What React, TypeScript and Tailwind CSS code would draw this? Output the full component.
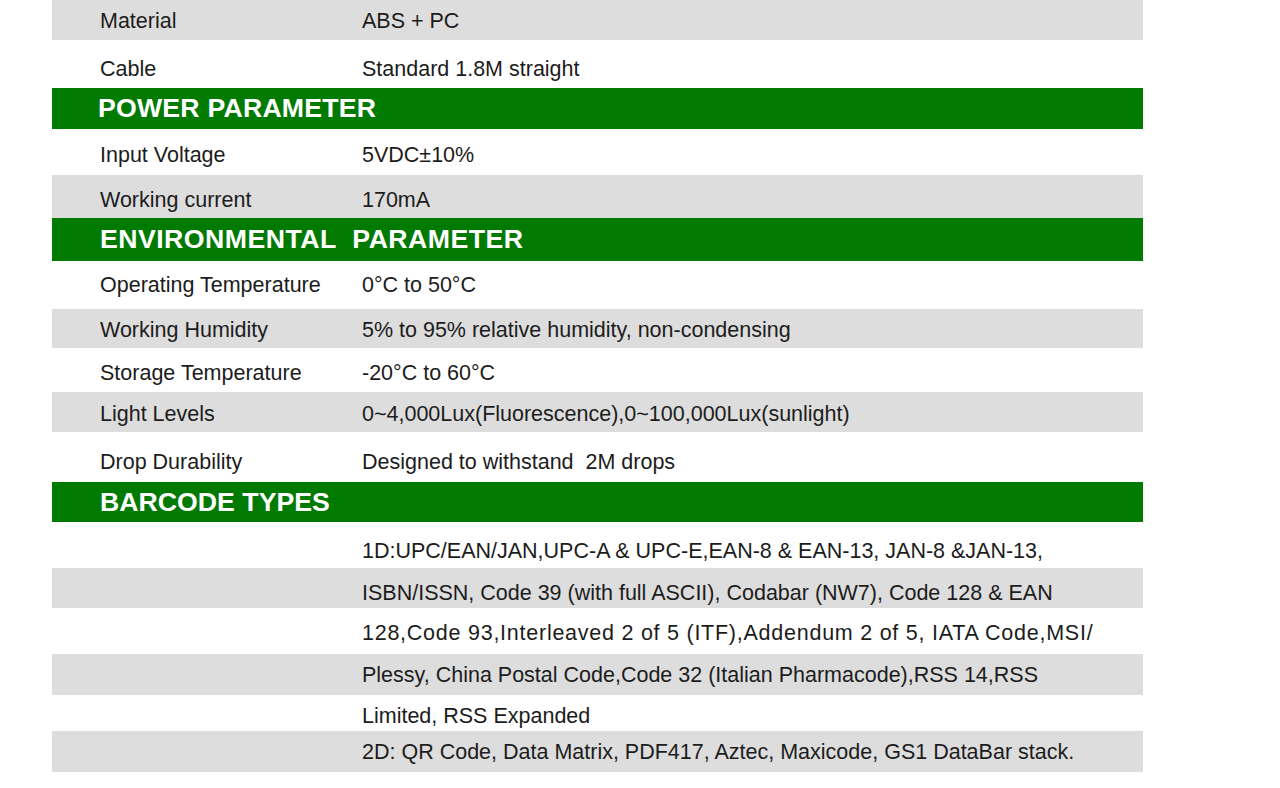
import React from 'react';

type Row =
  | { kind: 'head'; title: string; h: string; pad: string }
  | { kind: 'row'; label: string; value: string; h: string; grey: boolean; shift: string; track?: string };

const rows: Row[] = [
  { kind: 'row', label: 'Material', value: 'ABS + PC', h: 'h-[40px]', grey: true, shift: 'pt-[3px]' },
  { kind: 'row', label: 'Cable', value: 'Standard 1.8M straight', h: 'h-[48px]', grey: false, shift: 'pt-[11px]' },
  { kind: 'head', title: 'POWER PARAMETER', h: 'h-[41px] tracking-[0.2px]', pad: 'pl-[46px]' },
  { kind: 'row', label: 'Input Voltage', value: '5VDC±10%', h: 'h-[46px]', grey: false, shift: 'pt-[7px]' },
  { kind: 'row', label: 'Working current', value: '170mA', h: 'h-[43px]', grey: true, shift: 'pt-[8px]' },
  { kind: 'head', title: 'ENVIRONMENTAL\u00a0\u00a0PARAMETER', h: 'h-[43px] tracking-[0.45px]', pad: 'pl-[48px]' },
  { kind: 'row', label: 'Operating Temperature', value: '0°C to 50°C', h: 'h-[48px]', grey: false, shift: 'pt-[2px]' },
  { kind: 'row', label: 'Working Humidity', value: '5% to 95% relative humidity, non-condensing', h: 'h-[39px]', grey: true, shift: 'pt-[4px]' },
  { kind: 'row', label: 'Storage Temperature', value: '-20°C to 60°C', h: 'h-[44px]', grey: false, shift: 'pt-[8px]' },
  { kind: 'row', label: 'Light Levels', value: '0~4,000Lux(Fluorescence),0~100,000Lux(sunlight)', h: 'h-[40px]', grey: true, shift: 'pt-[5px]' },
  { kind: 'row', label: 'Drop Durability', value: 'Designed to withstand\u00a0\u00a02M drops', h: 'h-[50px]', grey: false, shift: 'pt-[11px]' },
  { kind: 'head', title: 'BARCODE TYPES', h: 'h-[40px]', pad: 'pl-[48px]' },
  { kind: 'row', label: '', value: '1D:UPC/EAN/JAN,UPC-A & UPC-E,EAN-8 & EAN-13, JAN-8 &JAN-13,', h: 'h-[46px]', grey: false, shift: 'pt-[13px]' },
  { kind: 'row', label: '', value: 'ISBN/ISSN, Code 39 (with full ASCII), Codabar (NW7), Code 128 & EAN', h: 'h-[40px]', grey: true, shift: 'pt-[11px]' },
  { kind: 'row', label: '', value: '128,Code 93,Interleaved 2 of 5 (ITF),Addendum 2 of 5, IATA Code,MSI/', h: 'h-[46px]', grey: false, shift: 'pt-[6px]', track: 'tracking-[0.75px]' },
  { kind: 'row', label: '', value: 'Plessy, China Postal Code,Code 32 (Italian Pharmacode),RSS 14,RSS', h: 'h-[41px]', grey: true, shift: 'pt-[3px]' },
  { kind: 'row', label: '', value: 'Limited, RSS Expanded', h: 'h-[36px]', grey: false, shift: 'pt-[7px]' },
  { kind: 'row', label: '', value: '2D: QR Code, Data Matrix, PDF417, Aztec, Maxicode, GS1 DataBar stack.', h: 'h-[41px]', grey: true, shift: 'pt-[3px]' },
];

export default function App() {
  return (
    <div className="min-h-[788px] w-[1280px] bg-white" style={{ fontFamily: '"Liberation Sans", Arial, sans-serif' }}>
      <div className="ml-[52px] w-[1091px] flex flex-col">
        {rows.map((r, i) =>
          r.kind === 'head' ? (
            <div key={i} className={`${r.h} ${r.pad} flex items-center bg-[#017a01] text-white font-bold text-[26.7px] leading-none`}>
              {r.title}
            </div>
          ) : (
            <div
              key={i}
              className={`${r.h} ${r.shift} ${r.grey ? 'bg-[#dddddd]' : 'bg-white'} flex items-center text-[21.5px] leading-none text-[#1c1c1c]`}
            >
              <div className="w-[310px] pl-[48px] shrink-0 whitespace-nowrap">{r.label}</div>
              <div className={`whitespace-nowrap ${r.track ?? ''}`}>{r.value}</div>
            </div>
          )
        )}
      </div>
    </div>
  );
}
